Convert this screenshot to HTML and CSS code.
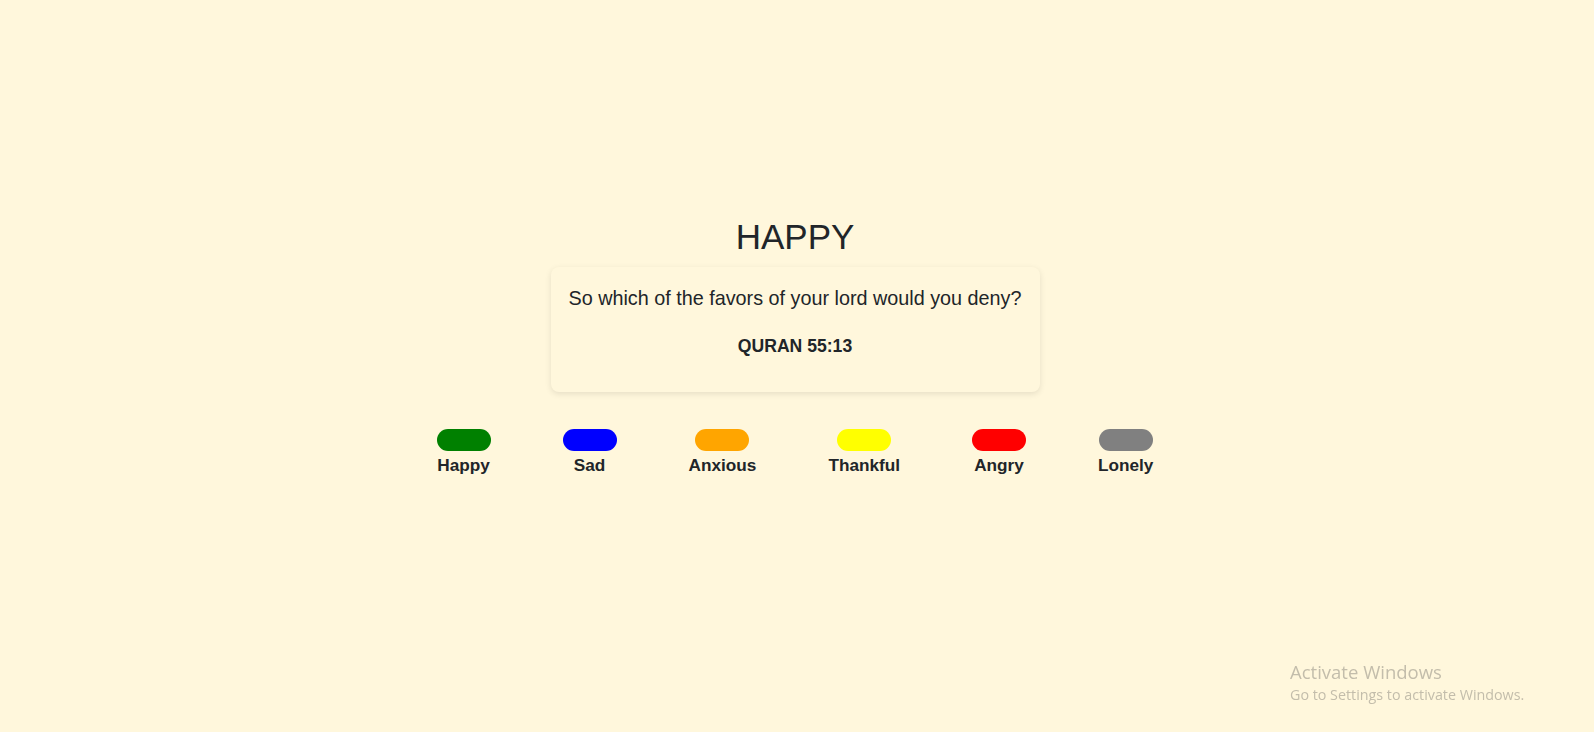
FILE: index.html
```html
<!DOCTYPE html>
<html lang="en">
<head>
<meta charset="utf-8">
<title>Mood Verses</title>
<link rel="stylesheet" href="styles.css">
</head>
<body>
<main class="page">
  <h1 class="mood-title">HAPPY</h1>
  <section class="verse-card">
    <p class="verse-text">So which of the favors of your lord would you deny?</p>
    <p class="verse-ref">QURAN 55:13</p>
  </section>
  <ul class="moods">
    <li class="mood"><span class="pill pill-happy"></span><span class="mood-label">Happy</span></li>
    <li class="mood"><span class="pill pill-sad"></span><span class="mood-label">Sad</span></li>
    <li class="mood"><span class="pill pill-anxious"></span><span class="mood-label">Anxious</span></li>
    <li class="mood"><span class="pill pill-thankful"></span><span class="mood-label">Thankful</span></li>
    <li class="mood"><span class="pill pill-angry"></span><span class="mood-label">Angry</span></li>
    <li class="mood"><span class="pill pill-lonely"></span><span class="mood-label">Lonely</span></li>
  </ul>
</main>
<div class="watermark">
  <div class="wm-title">Activate Windows</div>
  <div class="wm-sub">Go to Settings to activate Windows.</div>
</div>
</body>
</html>
```
FILE: styles.css
```css
html, body {
  margin: 0;
  padding: 0;
}
body {
  background: #fff7dc;
  color: #212529;
  font-family: "Liberation Sans", Arial, sans-serif;
  min-height: 732px;
  overflow: hidden;
}
.page {
  display: flex;
  flex-direction: column;
  align-items: center;
  padding-top: 217px;
  padding-right: 4px;
}
.mood-title {
  margin: 0;
  font-size: 35px;
  font-weight: 400;
  line-height: 39px;
}
.verse-card {
  margin-top: 11px;
  width: 489px;
  box-sizing: border-box;
  padding: 20px 8px 36px;
  border-radius: 8px;
  background: #fff7dc;
  box-shadow: 0 2px 6px rgba(0, 0, 0, 0.10);
  text-align: center;
}
.verse-text {
  margin: 0;
  font-size: 19.8px;
  line-height: 23px;
}
.verse-ref {
  margin: 26px 0 0;
  font-size: 17.6px;
  font-weight: 700;
  line-height: 20px;
}
.moods {
  list-style: none;
  margin: 37px 0 0;
  padding: 0;
  display: flex;
  gap: 72px;
}
.mood {
  display: flex;
  flex-direction: column;
  align-items: center;
  gap: 4px;
}
.pill {
  display: block;
  width: 54px;
  height: 22px;
  border-radius: 11px;
}
.pill-happy { background: #008000; }
.pill-sad { background: #0000ff; }
.pill-anxious { background: #ffa500; }
.pill-thankful { background: #ffff00; }
.pill-angry { background: #ff0000; }
.pill-lonely { background: #808080; }
.mood-label {
  font-size: 17.2px;
  font-weight: 700;
  line-height: 20px;
}
.watermark {
  position: fixed;
  left: 1290px;
  top: 661px;
  font-family: "Open Sans", "Noto Sans", sans-serif;
  color: #c3bdab;
}
.wm-title {
  font-size: 18.5px;
  line-height: 22px;
}
.wm-sub {
  margin-top: 4px;
  font-size: 14.3px;
  line-height: 16px;
}
```
